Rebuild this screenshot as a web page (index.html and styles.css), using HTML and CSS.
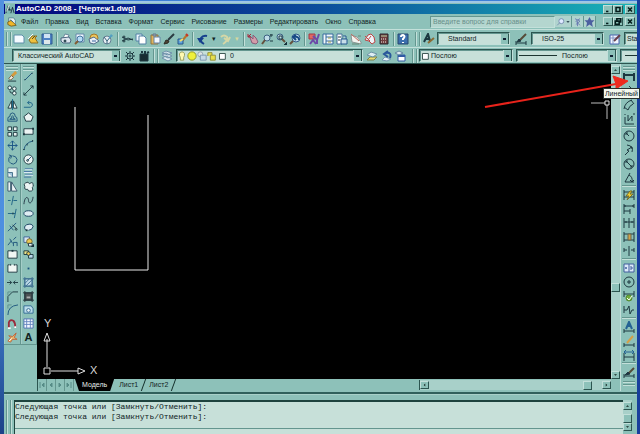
FILE: index.html
```html
<!DOCTYPE html>
<html lang="ru">
<head>
<meta charset="utf-8">
<title>AutoCAD 2008 - [Чертеж1.dwg]</title>
<link rel="stylesheet" href="styles.css">
</head>
<body>
<div class="app">
  <header class="titlebar">
    <svg class="logo" viewBox="0 0 12 12"><rect width="12" height="12" fill="#7fb9b4" stroke="none"/><path d="M1 11L4 2L6 8M3 7H7M7 11L9 4L11 11" stroke="#123"/><path d="M2 9L5 1" stroke="#fff"/></svg>
    <h1>AutoCAD 2008 - [Чертеж1.dwg]</h1>
    <div class="winbtns">
      <button aria-label="Свернуть"><svg viewBox="0 0 9 9"><path d="M2 7H5" /></svg></button>
      <button aria-label="Развернуть"><svg viewBox="0 0 9 9"><path d="M2 2H7V7H2Z"/></svg></button>
      <button class="close" aria-label="Закрыть"><svg viewBox="0 0 9 9"><path d="M2 2L7 7M7 2L2 7"/></svg></button>
    </div>
  </header>

  <nav class="menubar">
    <svg class="logo" viewBox="0 0 12 12"><path d="M2 1H8L10 4V9H2Z" fill="#e8f0f0" stroke="#4a7a8a"/><path d="M1 6L5 4L11 10L5 11L1 9Z" fill="#f0b62a" stroke="#6f5a1a"/><path d="M4 3L7 6" stroke="#2a6ab0"/></svg>
    <a href="#">Файл</a><a href="#">Правка</a><a href="#">Вид</a><a href="#">Вставка</a><a href="#">Формат</a><a href="#">Сервис</a><a href="#">Рисование</a><a href="#">Размеры</a><a href="#">Редактировать</a><a href="#">Окно</a><a href="#">Справка</a>
    <div class="help">
      <input type="text" aria-label="Поиск в справке" placeholder="Введите вопрос для справки">
      <button class="wide" aria-label="Найти"><svg viewBox="0 0 16 12"><circle cx="6" cy="5" r="3" fill="#dfe9ff" stroke="#6f86a8"/><path d="M4 7L1 10" stroke="#6f86a8"/><path d="M12 5H16L14 7Z" fill="#123" stroke="none"/></svg></button>
      <button aria-label="Центр связи"><svg viewBox="0 0 12 12"><path d="M3 2L9 5L4 9M9 2L4 5L9 10M6 5V11" stroke="#6573b0"/></svg></button>
      <button aria-label="Избранное"><svg viewBox="0 0 12 12"><path d="M6 0L8 4H12L9 7L10 12L6 9L2 12L3 7L0 4H4Z" fill="#4c5fa0" stroke="none"/></svg></button>
    </div>
    <div class="winbtns">
      <button aria-label="Свернуть чертеж"><svg viewBox="0 0 9 9"><path d="M2 7H5"/></svg></button>
      <button aria-label="Восстановить чертеж"><svg viewBox="0 0 9 9"><path d="M3 3V1H8V5H6M1 4H6V8H1Z"/></svg></button>
      <button class="close" aria-label="Закрыть чертеж"><svg viewBox="0 0 9 9"><path d="M2 2L7 7M7 2L2 7"/></svg></button>
    </div>
  </nav>

  <div class="bar">
    <i class="grip first"></i>
    <button class="tool" aria-label="Создать"><svg viewBox="0 0 12 12"><path d="M1 2H9L11 4V10H1Z" fill="#f4faff" stroke="#5f8fa8"/></svg></button>
    <button class="tool" aria-label="Открыть"><svg viewBox="0 0 12 12"><path d="M2 7L5 3H10L8 5L11 10H4Z" fill="#eec03e" stroke="#8a7024"/><path d="M1 6L6 1" stroke="#f6fbff"/><path d="M5 6L8 3" stroke="#584d28"/></svg></button>
    <button class="tool" aria-label="Сохранить"><svg viewBox="0 0 12 12"><path d="M1 1H11V11H1Z" fill="#4d82c4" stroke="#315a91"/><path d="M3 1H9V5H3Z" fill="#cfe3f4" stroke="none"/><path d="M3 7H9V11H3Z" fill="#dfe8ea" stroke="none"/></svg></button>
    <i class="sep"></i>
    <button class="tool" aria-label="Печать"><svg viewBox="0 0 12 12"><path d="M3 5L5 1L9 2L8 5" fill="#fff" stroke="#68889a"/><path d="M1 5L9 4L11 7L10 10L3 10L1 8Z" fill="#dbe5ee" stroke="#4b6680"/><circle cx="5" cy="8" r="1" fill="#4b6680"/></svg></button>
    <button class="tool" aria-label="Предварительный просмотр"><svg viewBox="0 0 12 12"><path d="M2 1H10V9H2Z" fill="#f1f7ff" stroke="#6488a8"/><circle cx="6" cy="6" r="3" fill="#b5dcf5" stroke="#4474a0"/><path d="M4 8L1 11" stroke="#835d34" stroke-width="2"/></svg></button>
    <button class="tool" aria-label="Публикация"><svg viewBox="0 0 12 12"><circle cx="6" cy="5" r="4" fill="#ecc65b" stroke="#a67828"/><path d="M1 6L6 4L11 8L6 11L2 10Z" fill="#e7eef5" stroke="#526b8a"/><path d="M4 8H8" stroke="#3d66a0"/></svg></button>
    <button class="tool" aria-label="3D DWF"><svg viewBox="0 0 12 12"><circle cx="5" cy="7" r="4" fill="#e6edf2" stroke="#647f93"/><path d="M2 4L5 8L10 2M5 8V11" stroke="#36647a"/><path d="M6 6L9 1L11 3Z" fill="#52a0c3" stroke="none"/></svg></button>
    <i class="sep"></i>
    <button class="tool" aria-label="Вырезать"><svg viewBox="0 0 12 12"><path d="M1 4L7 7L12 6M1 8L7 5L12 7"/><circle cx="3" cy="4" r="1"/><circle cx="3" cy="8" r="1"/></svg></button>
    <button class="tool" aria-label="Копировать"><svg viewBox="0 0 12 12"><path d="M1 1H7V8H1Z" fill="#eaf4fc" stroke="#5381a5"/><path d="M4 3H9L11 5V11H4Z" fill="#fff" stroke="#5381a5"/></svg></button>
    <button class="tool" aria-label="Вставить"><svg viewBox="0 0 12 12"><path d="M2 2H9V11H2Z" fill="#dfb45c" stroke="#8b7342"/><path d="M4 1H7V3H4Z" fill="#9ab" stroke="#678"/><path d="M5 4H11V10H5Z" fill="#f3f8ff" stroke="#6583a5"/></svg></button>
    <button class="tool" aria-label="Копирование свойств"><svg viewBox="0 0 12 12"><path d="M5 7L11 1" stroke="#2b3b42" stroke-width="2"/><path d="M1 11L3 7L6 8L5 10Z" fill="#4d4434" stroke="#2d2c24"/></svg></button>
    <button class="tool" aria-label="Редактор блоков"><svg viewBox="0 0 12 12"><path d="M5 8L10 2" stroke="#b9742a" stroke-width="2"/><path d="M9 1L11 3" stroke="#c63526" stroke-width="2"/><path d="M1 6H6V11H1Z" fill="#61a5df" stroke="#275788"/><path d="M3 8L6 6" stroke="#f5dd67" stroke-width="2"/></svg></button>
    <i class="sep"></i>
    <button class="tool" aria-label="Отменить"><svg viewBox="0 0 12 12"><path d="M8 11Q3 8 5 5Q7 2 11 3" stroke="#163f8d" stroke-width="2"/><path d="M1 5H8L4 10Z" fill="#163f8d" stroke="none"/></svg></button>
    <button class="drop" aria-label="Список отмены">▾</button>
    <button class="tool" aria-label="Повторить"><svg viewBox="0 0 12 12"><path d="M4 11Q9 8 8 4Q5 1 2 4M5 5L9 8L11 4" stroke="#d5d7a6" stroke-width="2"/></svg></button>
    <button class="drop faint" aria-label="Список повтора">▾</button>
    <i class="sep"></i>
    <button class="tool" aria-label="Панорамирование"><svg viewBox="0 0 12 12"><path d="M2 2L6 6V2L9 5L11 9L9 11L5 10Z" fill="#d39caa" stroke="#875e79"/><path d="M1 4L4 1M1 1V4H4" stroke="#a92739"/></svg></button>
    <button class="tool" aria-label="Зумирование"><svg viewBox="0 0 12 12"><circle cx="6" cy="5" r="3" fill="#bfdde8" stroke="#3b6080"/><path d="M4 7L1 11" stroke="#65513e" stroke-width="2"/><path d="M9 2H12M10 1V4M9 8H12"/></svg></button>
    <button class="tool" aria-label="Зумирование рамкой"><svg viewBox="0 0 12 12"><circle cx="5" cy="4" r="3" fill="#bfdde8" stroke="#3b6080"/><path d="M7 6L10 9" stroke="#65513e" stroke-width="2"/><path d="M4 3H7V6H4Z"/><path d="M12 9V12H9Z" fill="#123"/></svg></button>
    <button class="tool" aria-label="Предыдущий вид"><svg viewBox="0 0 12 12"><circle cx="7" cy="5" r="4" fill="#bfdde8" stroke="#335b8c"/><path d="M4 8L1 11" stroke="#65513e" stroke-width="2"/><path d="M10 7Q10 3 5 4M7 2L4 4L7 7" stroke="#164884" stroke-width="2"/></svg></button>
    <i class="sep"></i>
    <button class="tool" aria-label="Свойства"><svg viewBox="0 0 12 12"><path d="M1 1H7V6H1Z" fill="#df6863" stroke="#a53946"/><path d="M5 3L9 7L11 1M2 11L5 7L8 11M9 6V11" stroke="#6c4aa8" stroke-width="2"/></svg></button>
    <button class="tool" aria-label="Центр управления"><svg viewBox="0 0 12 12"><path d="M1 1H11V11H1Z" fill="#f3f8fb" stroke="#366b9d"/><path d="M4 1V11M4 4H11M4 8H11" stroke="#366b9d"/><path d="M6 5H9M6 9H9" stroke="#9f9c49"/></svg></button>
    <button class="tool" aria-label="Инструментальные палитры"><svg viewBox="0 0 12 12"><path d="M1 1H6V11H1Z" fill="#fff" stroke="#456f99"/><path d="M7 3H10V6M5 6H11V11H5Z" fill="#c7dde9" stroke="#24588d"/><path d="M2 4H5M2 7H4"/></svg></button>
    <button class="tool" aria-label="Подшивки"><svg viewBox="0 0 12 12"><path d="M1 2L7 4L11 9V11L2 9Z" fill="#f1f3ef" stroke="#8b9795"/><path d="M1 1L9 8" stroke="#bf6c61"/><path d="M8 3H11M2 11H9" stroke="#687"/></svg></button>
    <button class="tool" aria-label="Пометки"><svg viewBox="0 0 12 12"><path d="M4 2L7 1L10 4L11 9L8 11L5 8L1 7Z" fill="#edf2f7" stroke="#bd4545"/><path d="M1 3L6 8M7 3L4 7" stroke="#c74545"/></svg></button>
    <button class="tool" aria-label="Калькулятор"><svg viewBox="0 0 12 12"><path d="M2 1H10V11H2Z" fill="#713e3e" stroke="#26272d"/><path d="M3 3H9" stroke="#b7d3a8"/><path d="M3 6H9M3 9H9" stroke="#edf1ed" stroke-dasharray="1 1"/></svg></button>
    <i class="sep"></i>
    <button class="tool" aria-label="Справка"><svg viewBox="0 0 12 12"><path d="M1 1H11V11H1Z" fill="#3c6fae" stroke="#27466e"/><path d="M4 4Q4 2 6 2Q9 3 6 6V7M6 9V10" stroke="#fff" stroke-width="2"/></svg></button>
    <i class="grip second"></i>
    <button class="tool" aria-label="Текстовые стили"><svg viewBox="0 0 12 12"><path d="M1 9L5 1L7 8M3 6H6" stroke-width="2"/><path d="M5 10L11 5" stroke="#8b6b34" stroke-width="2"/></svg></button>
    <select class="field style" aria-label="Текстовый стиль"><option>Standard</option></select>
    <button class="tool gap" aria-label="Размерные стили"><svg viewBox="0 0 12 12"><path d="M1 8V12M11 8V12M1 10H11"/><path d="M4 8L11 1" stroke="#554b38" stroke-width="2"/><path d="M2 9L4 6L6 8Z" fill="#234"/></svg></button>
    <select class="field style" aria-label="Размерный стиль"><option>ISO-25</option></select>
    <button class="tool gap" aria-label="Стили таблиц"><svg viewBox="0 0 12 12"><path d="M1 2H10V11H1Z" fill="#f1f6ff" stroke="#4965b0"/><path d="M1 5H10M4 2V11" stroke="#8095c5"/><path d="M5 8L11 2" stroke="#673f4c" stroke-width="2"/></svg></button>
    <select class="field cut" aria-label="Стиль таблиц"><option>Standard</option></select>
  </div>

  <div class="bar low">
    <select class="field space" aria-label="Рабочее пространство"><option>Классический AutoCAD</option></select>
    <button class="tool" aria-label="Параметры рабочего пространства"><svg viewBox="0 0 12 12"><circle cx="6" cy="6" r="3"/><circle cx="6" cy="6" r="1"/><path d="M6 1V3M6 9V11M1 6H3M9 6H11M2 2L4 4M8 8L10 10M10 2L8 4M4 8L2 10"/></svg></button>
    <button class="tool" aria-label="Мое рабочее пространство"><svg viewBox="0 0 12 12"><path d="M2 4H10V11H2Z" fill="#182c31"/><path d="M3 2H5M7 1V4M9 3L11 2" stroke-width="2"/></svg></button>
    <i class="grip"></i>
    <button class="tool" aria-label="Слои"><svg viewBox="0 0 12 12"><path d="M1 8L5 6L11 9L7 11Z M1 5L5 3L11 6L7 8Z M1 3L5 1L11 3L7 5Z" fill="#dceaf0" stroke="#6e91aa"/></svg></button>
    <div class="field layer">
      <svg viewBox="0 0 12 12"><path d="M4 8Q1 2 6 1Q11 2 8 8V11H4Z" fill="#fff9b1" stroke="#8b9451"/></svg>
      <svg viewBox="0 0 12 12"><circle cx="6" cy="6" r="5" fill="#eff03b" stroke="#858b27"/></svg>
      <svg viewBox="0 0 12 12"><circle cx="4" cy="4" r="3" fill="#e2e6e5" stroke="#8b9eac"/><path d="M4 5H11V11H4Z" fill="#c6d9e7" stroke="#7491a9"/></svg>
      <svg viewBox="0 0 12 12"><path d="M1 6V2H6V5M4 5H10V11H4Z" fill="#e7df49" stroke="#89852f"/></svg>
      <svg class="swatch" viewBox="0 0 12 12"><path d="M3 3H10V10H3Z" fill="#fff" stroke="#203d3a"/></svg>
      <select aria-label="Слой"><option>0</option></select>
    </div>
    <button class="tool" aria-label="Сделать слой текущим"><svg viewBox="0 0 12 12"><path d="M1 10L4 7H11L8 10Z" fill="#eadc71" stroke="#7e8551"/><path d="M1 5L5 2L11 4L7 7Z" fill="#dfeef2" stroke="#6d93a5"/></svg></button>
    <button class="tool" aria-label="Предыдущий слой"><svg viewBox="0 0 12 12"><path d="M2 10L5 7L11 9L7 11Z" fill="#e7f2f7" stroke="#7298b1"/><path d="M10 8Q12 2 6 3M8 1L4 4L8 7" stroke="#29579b" stroke-width="2"/></svg></button>
    <button class="tool" aria-label="Состояния слоев"><svg viewBox="0 0 12 12"><path d="M4 5H11V11H4Z" fill="#fff" stroke="#315ba5"/><path d="M4 6H11" stroke="#315ba5" stroke-width="2"/><path d="M1 3L5 1L9 3L5 5Z" fill="#d9e8ef" stroke="#6285a0"/></svg></button>
    <i class="grip second"></i>
    <div class="field color"><svg class="swatch" viewBox="0 0 12 12"><path d="M3 3H10V10H3Z" fill="#fff" stroke="#203d3a"/></svg><select aria-label="Цвет"><option>Послою</option></select></div>
    <div class="field linetype"><i class="line"></i><select aria-label="Тип линий"><option>Послою</option></select></div>
    <div class="field cut"><i class="line"></i><select aria-label="Вес линий"><option>Послою</option></select></div>
  </div>

  <main class="work">
    <aside class="tools" aria-label="Редактирование">
      <i class="hgrip"></i>
      <div class="stack">
        <button aria-label="Стереть"><svg viewBox="0 0 12 12"><path d="M5 6L10 1" stroke="#d59a3c" stroke-width="3"/><path d="M2 8L5 5L7 7L4 10Z" fill="#f4eee3" stroke="#725536"/><path d="M1 11H10"/></svg></button>
        <button aria-label="Копировать объект"><svg viewBox="0 0 12 12"><circle cx="3" cy="3" r="2" fill="#edf7f5"/><circle cx="8" cy="4" r="2" fill="#edf7f5"/><circle cx="8" cy="9" r="2" fill="#edf7f5"/><path d="M3 6Q3 9 6 9"/></svg></button>
        <button aria-label="Зеркало"><svg viewBox="0 0 12 12"><path d="M5 2V10H1ZM7 2V10H11Z" fill="#edf7f5"/><path d="M6 0V12" stroke="#17658a"/></svg></button>
        <button aria-label="Подобие"><svg viewBox="0 0 12 12"><path d="M1 10V7Q1 5 3 5Q3 1 6 1Q9 1 9 5Q11 5 11 8V10Z" stroke="#1c527b"/><path d="M3 8Q3 7 5 7Q5 4 6 4Q7 4 7 7Q9 7 9 8Z" stroke="#1c527b"/></svg></button>
        <button aria-label="Массив"><svg viewBox="0 0 12 12"><path d="M1 1H5V5H1ZM7 1H11V5H7ZM1 7H5V11H1ZM7 7H11V11H7Z" fill="#e4efed"/></svg></button>
        <button aria-label="Перенести"><svg viewBox="0 0 12 12"><path d="M6 1V11M1 6H11M4 3L6 1L8 3M4 9L6 11L8 9M3 4L1 6L3 8M9 4L11 6L9 8" stroke="#185386"/></svg></button>
        <button aria-label="Повернуть"><svg viewBox="0 0 12 12"><path d="M4 2Q1 4 2 8Q4 11 7 11Q11 10 11 6Q10 2 6 2M2 1L5 2L4 5" stroke="#1c527b"/></svg></button>
        <button aria-label="Масштаб"><svg viewBox="0 0 12 12"><path d="M1 1H11V11H1Z" fill="#edf5f6" stroke="#4a7187"/><path d="M1 6H6V11" fill="#a1c5dc" stroke="#426d89"/></svg></button>
        <button aria-label="Растянуть"><svg viewBox="0 0 12 12"><path d="M1 1H4V11H1ZM5 1L11 11H5Z" fill="#edf5f6" stroke="#39576b"/></svg></button>
        <button aria-label="Обрезать"><svg viewBox="0 0 12 12"><path d="M1 6H4M7 6H11M7 1L5 11" stroke="#1c6083"/></svg></button>
        <button aria-label="Удлинить"><svg viewBox="0 0 12 12"><path d="M1 6H9M10 1L8 11" stroke="#1c6083"/><path d="M6 6H7" stroke-width="2"/></svg></button>
        <button aria-label="Разорвать в точке"><svg viewBox="0 0 12 12"><path d="M1 10L10 1M3 4L7 9" stroke="#1c527b"/><path d="M6 3L10 7" stroke="#234"/><circle cx="10" cy="8" r="1"/></svg></button>
        <button aria-label="Разорвать"><svg viewBox="0 0 12 12"><path d="M1 10L5 5M7 4L10 1M3 3L6 8M7 11V7H11V11" stroke="#1c527b"/></svg></button>
        <button aria-label="Прямоугольник разрыва"><svg viewBox="0 0 12 12"><path d="M1 2H11V10H1Z" fill="#f1f7f4"/><path d="M5 2H7" stroke-width="2"/></svg></button>
        <button aria-label="Разрыв в контуре"><svg viewBox="0 0 12 12"><path d="M3 2H1V10H11V2H9" fill="#f1f7f4"/><path d="M4 1V3M8 1V3"/></svg></button>
        <button aria-label="Соединить"><svg viewBox="0 0 12 12"><path d="M0 6H5M7 6H12M3 4L5 6L3 8M9 4L7 6L9 8"/></svg></button>
        <button aria-label="Фаска"><svg viewBox="0 0 12 12"><path d="M1 12V6L6 1H12"/><path d="M1 5V1H5" stroke="#5e928f"/></svg></button>
        <button aria-label="Сопряжение"><svg viewBox="0 0 12 12"><path d="M1 12Q1 2 12 1" stroke="#1b547d"/><path d="M1 5V1H5" stroke="#5e928f"/></svg></button>
        <button aria-label="Магнит"><svg viewBox="0 0 12 12"><path d="M2 11L2 5Q3 1 7 3Q9 5 9 10" stroke="#9b2b3c" stroke-width="2"/><path d="M1 11H4M8 10H10" stroke="#fff" stroke-width="2"/></svg></button>
        <button aria-label="Расчленить"><svg viewBox="0 0 12 12"><path d="M1 10L4 6L2 4L6 5L10 1L8 6L11 8L6 8L4 11Z" fill="#edbb70" stroke="#bb623a"/><path d="M2 10L5 7" stroke="#fff"/></svg></button>
      </div>
    </aside>
    <aside class="tools" aria-label="Рисование">
      <i class="hgrip"></i>
      <div class="stack">
        <button aria-label="Отрезок"><svg viewBox="0 0 12 12"><path d="M2 10L10 2" stroke="#1b547d"/><path d="M2 9V10M10 2V3" stroke="#123"/></svg></button>
        <button aria-label="Прямая"><svg viewBox="0 0 12 12"><path d="M1 11L11 1M1 8V11H4M8 1H11V4"/></svg></button>
        <button aria-label="Полилиния"><svg viewBox="0 0 12 12"><path d="M1 9H8Q12 7 9 4H5M7 2L5 4L7 6" stroke="#1b6288"/></svg></button>
        <button aria-label="Многоугольник"><svg viewBox="0 0 12 12"><path d="M6 1L11 5L9 10H3L1 5Z" fill="#ecf4f3"/></svg></button>
        <button aria-label="Прямоугольник"><svg viewBox="0 0 12 12"><path d="M1 3H11V9H1Z" fill="#ecf4f3"/><path d="M0 9H2M10 3H12" stroke-width="2"/></svg></button>
        <button aria-label="Дуга"><svg viewBox="0 0 12 12"><path d="M1 11Q2 3 11 1" stroke="#1b547d"/><path d="M1 10V11M4 5H5M10 1H11" stroke-width="2"/></svg></button>
        <button aria-label="Круг"><svg viewBox="0 0 12 12"><circle cx="6" cy="6" r="5" fill="#ecf4f3"/><path d="M5 7L9 3" stroke="#1b547d"/><circle cx="5" cy="7" r="1"/></svg></button>
        <button aria-label="Полосы"><svg viewBox="0 0 12 12"><path d="M2 2H11M1 5H10M2 8H11M1 11H9" stroke="#3f6fa2"/><path d="M2 3H10M1 6H10M2 9H11" stroke="#e2eff8"/></svg></button>
        <button aria-label="Облако"><svg viewBox="0 0 12 12"><path d="M3 2Q6 0 7 3Q11 0 11 4Q12 6 10 7Q12 11 8 11Q6 12 5 9Q1 10 2 6Q0 3 3 2Z" fill="#ecf4f3"/></svg></button>
        <button aria-label="Сплайн"><svg viewBox="0 0 12 12"><path d="M1 10C2 0 6 2 6 6S10 10 11 2" stroke="#234"/></svg></button>
        <button aria-label="Эллипс"><svg viewBox="0 0 12 12"><ellipse cx="6" cy="6" rx="5" ry="3" fill="#dfedf3" stroke="#173e5e"/></svg></button>
        <button aria-label="Эллиптическая дуга"><svg viewBox="0 0 12 12"><path d="M3 9Q0 5 4 3Q10 1 11 5Q10 9 6 9" fill="#dfedf3" stroke="#173e5e"/><path d="M3 9H5" stroke-width="2"/></svg></button>
        <button aria-label="Вставить блок"><svg viewBox="0 0 12 12"><path d="M1 1H7V7H1Z" fill="#d6e5f2" stroke="#3e6394"/><circle cx="7" cy="6" r="3" fill="#eac854" stroke="#71652d"/><path d="M6 8H10V11H6Z" fill="#edf4f8"/><path d="M12 9V12H9Z" fill="#123"/></svg></button>
        <button aria-label="Создать блок"><svg viewBox="0 0 12 12"><path d="M1 2H6V6H1Z" fill="#e8e28a"/><path d="M6 6H11V10H6Z" fill="#b9d8ea"/><circle cx="6" cy="5" r="2" fill="#ecc956"/></svg></button>
        <button aria-label="Точка"><svg viewBox="0 0 12 12"><path d="M6 5V7" stroke="#1b547d" stroke-width="2"/></svg></button>
        <button aria-label="Штриховка"><svg viewBox="0 0 12 12"><path d="M2 2H10V10H2Z" fill="#bcd9e7" stroke="#2c5d83"/><path d="M2 7L7 2M3 10L10 3M7 10L10 7M0 2H12M0 10H12M2 0V12M10 0V12" stroke="#3f7292"/></svg></button>
        <button aria-label="Градиент"><svg viewBox="0 0 12 12"><path d="M2 2H10V10H2Z" fill="#4d5254"/><path d="M0 2H12M0 10H12M2 0V12M10 0V12" stroke="#26343b"/><path d="M4 7H8" stroke="#a9aeae" stroke-width="2"/></svg></button>
        <button aria-label="Область"><svg viewBox="0 0 12 12"><path d="M1 2H9L11 5V10H1Z" fill="#bbddeb" stroke="#2e6790"/><circle cx="6" cy="7" r="2" fill="#e9f2f5" stroke="#2e6790"/></svg></button>
        <button aria-label="Таблица"><svg viewBox="0 0 12 12"><path d="M1 1H11V11H1Z" fill="#f4f8ff" stroke="#4c6eb0"/><path d="M1 4H11M1 7H11M4 1V11M8 1V11" stroke="#6685c0"/></svg></button>
        <button class="letter" aria-label="Многострочный текст">A</button>
      </div>
    </aside>

    <section class="drawing">
      <div class="canvas">
        <svg class="sketch" width="574" height="317" viewBox="0 0 574 317">
          <path d="M38 43V206H111V51" stroke="#e8e8e8"/>
          <path d="M10 303V275M14 307H41M7 304H13V310H7ZM7 277L10 269L13 277ZM41 304L48 307L41 310Z" stroke="#e0e0e0"/>
          <path d="M554 39H568M570 41V55" stroke="#bcbcbc"/><path d="M568 37H572V41H568Z" stroke="#e0e0e0"/>
        </svg>
        <span class="axis y">Y</span><span class="axis x">X</span>
      </div>
      <div class="vscroll"><button aria-label="Вверх"><svg viewBox="0 0 8 8"><path d="M2 5H6L4 3Z"/></svg></button><i></i><button aria-label="Вниз"><svg viewBox="0 0 8 8"><path d="M2 3H6L4 5Z"/></svg></button></div>
      <footer class="tabs">
        <div class="tabnav">
          <button aria-label="Первый лист"><svg viewBox="0 0 8 8"><path d="M2 1V7M6 2L4 4L6 6Z"/></svg></button><button aria-label="Предыдущий лист"><svg viewBox="0 0 8 8"><path d="M5 2L3 4L5 6Z"/></svg></button><button aria-label="Следующий лист"><svg viewBox="0 0 8 8"><path d="M3 2L5 4L3 6Z"/></svg></button><button aria-label="Последний лист"><svg viewBox="0 0 8 8"><path d="M6 1V7M2 2L4 4L2 6Z"/></svg></button>
        </div>
        <a class="active" href="#">Модель</a><a href="#">Лист1</a><a href="#">Лист2</a>
        <div class="hscroll"><button aria-label="Влево"><svg viewBox="0 0 8 8"><path d="M5 2L3 4L5 6Z"/></svg></button><i></i><button aria-label="Вправо"><svg viewBox="0 0 8 8"><path d="M3 2L5 4L3 6Z"/></svg></button></div>
      </footer>
      <div class="corner"></div>
    </section>

    <aside class="dims" aria-label="Размеры">
      <i class="hgrip"></i>
      <button aria-label="Линейный"><svg viewBox="0 0 12 12"><path d="M1 2V10M11 2V10M1 4H11" stroke-width="2"/></svg></button>
      <button aria-label="Параллельный"><svg viewBox="0 0 12 12"><path d="M2 8L8 2M1 6L4 10M6 1L10 5"/></svg></button>
      <button aria-label="Длина дуги"><svg viewBox="0 0 12 12"><path d="M1 10Q2 3 9 1M5 11Q6 7 10 5M1 8L5 11M8 1L11 5"/></svg></button>
      <button aria-label="Ординатный"><svg viewBox="0 0 12 12"><path d="M2 4V11H11M5 2V8L9 3V8M2 1V2M10 1H12"/></svg></button>
      <hr>
      <button aria-label="Радиус"><svg viewBox="0 0 12 12"><circle cx="6" cy="6" r="5"/><path d="M6 6L3 3M3 5V3H5"/></svg></button>
      <button aria-label="Излом"><svg viewBox="0 0 12 12"><path d="M4 1Q11 2 9 8M2 11L6 7L4 6L9 3M7 3H9V5"/></svg></button>
      <button aria-label="Диаметр"><svg viewBox="0 0 12 12"><circle cx="6" cy="6" r="5"/><path d="M3 3L9 9M3 5V3H5M7 9H9V7"/></svg></button>
      <button aria-label="Угловой"><svg viewBox="0 0 12 12"><path d="M7 1L2 10H11M6 3Q10 5 9 10M7 8L9 10L11 8"/></svg></button>
      <hr>
      <button aria-label="Быстрый размер"><svg viewBox="0 0 12 12"><path d="M1 1V11M11 1V11M1 3H11M1 8H11"/><path d="M7 2L3 7H6L4 11L10 5H7L9 2Z" fill="#f2cf32" stroke="#796c26"/></svg></button>
      <button aria-label="Базовый"><svg viewBox="0 0 12 12"><path d="M1 1V11M11 1V5M7 6V11M1 3H11M1 8H7M2 2V4M10 2V4"/></svg></button>
      <button aria-label="Цепь"><svg viewBox="0 0 12 12"><path d="M1 1V11M6 1V11M11 1V11M1 5H11M3 4V6M9 4V6"/></svg></button>
      <button aria-label="Расстояние"><svg viewBox="0 0 12 12"><path d="M1 1V11M11 1V11M1 3H11M1 9H11"/><path d="M5 3H8V9H5Z" fill="#d4a348" stroke="#6b674b"/></svg></button>
      <button aria-label="Разрыв размера"><svg viewBox="0 0 12 12"><path d="M1 5H4M8 5H11M1 3V7M11 3V7M6 1V11"/></svg></button>
      <hr>
      <button aria-label="Допуск"><svg viewBox="0 0 12 12"><path d="M1 2H11V10H1ZM6 2V10" fill="#dce9f9" stroke="#405f9c"/><path d="M2 6H4M3 5V7M8 4V8M8 6H10" stroke="#405f9c"/></svg></button>
      <button aria-label="Маркер центра"><svg viewBox="0 0 12 12"><circle cx="6" cy="6" r="5"/><path d="M6 4V8M4 6H8"/></svg></button>
      <button aria-label="Контроль"><svg viewBox="0 0 12 12"><path d="M1 1V7M11 1V7M1 4H11"/><circle cx="6" cy="8" r="3" fill="#72ad3b" stroke="#538832"/><path d="M4 8L6 10L9 6" stroke="#fff"/></svg></button>
      <button aria-label="Линейный излом"><svg viewBox="0 0 12 12"><path d="M1 2V9M1 6H4L6 2L7 10L9 6H11"/></svg></button>
      <hr>
      <button aria-label="Редактировать размер"><svg viewBox="0 0 12 12"><path d="M1 8V12M11 8V12M1 10H11"/><path d="M3 8L6 1L9 8M4 5H8" stroke="#246293" stroke-width="2"/></svg></button>
      <button aria-label="Редактировать текст"><svg viewBox="0 0 12 12"><path d="M1 8V12M11 8V12M1 10H11"/><path d="M4 8L10 1" stroke="#d5a046" stroke-width="2"/></svg></button>
      <button aria-label="Обновить размер"><svg viewBox="0 0 12 12"><path d="M1 4V12M11 4V12M1 8H11"/><path d="M2 3H10M3 1L1 3L3 5M9 1L11 3L9 5" stroke="#246293"/></svg></button>
      <hr>
      <button aria-label="Размерный стиль"><svg viewBox="0 0 12 12"><path d="M1 8V12M11 8V12M1 10H11"/><path d="M5 8L11 2" stroke="#554b38" stroke-width="2"/><path d="M2 9L5 6L7 8Z" fill="#234"/></svg></button>
      <i class="hgrip last"></i>
    </aside>
  </main>

  <section class="command">
    <i class="grip"></i>
    <div class="console">
      <pre>Следующая точка или [Замкнуть/Отменить]:
Следующая точка или [Замкнуть/Отменить]:</pre>
      <input type="text" aria-label="Команда">
    </div>
    <div class="vscroll"><button aria-label="Вверх по журналу"><svg viewBox="0 0 8 8"><path d="M2 5H6L4 3Z"/></svg></button><i></i><button aria-label="Вниз по журналу"><svg viewBox="0 0 8 8"><path d="M2 3H6L4 5Z"/></svg></button></div>
  </section>
</div>

<svg class="pointer" width="146" height="38" viewBox="0 0 146 38"><path d="M1 32L132 9" stroke="#e8231b" stroke-width="2"/><path d="M144 6L129 1L132 9L132 14Z" fill="#ee2a1e" stroke="#ee2a1e"/></svg>
<div class="tip" role="tooltip">Линейный</div>
</body>
</html>
```
FILE: styles.css
```css
:root {
  --face: #8dc1b9;
  --light: #c3e0da;
  --track: #a8d0c9;
  --field: #c7e0d9;
  --dark: #2c5550;
  --mid: #64968f;
}

* { box-sizing: border-box; }

body {
  margin: 0;
  height: 100vh;
  overflow: hidden;
  position: relative;
  background: linear-gradient(#5290df, #4c8fe0 60%, #1c4288);
  color: #10231f;
  font: 7px/10px "Liberation Sans", sans-serif;
}

svg { display: block; fill: none; stroke: #1d3840; }

button, select, input {
  margin: 0;
  padding: 0;
  border: 0;
  border-radius: 0;
  background: none;
  color: inherit;
  font: inherit;
}

a { color: inherit; text-decoration: none; }

.app {
  height: 100%;
  margin: 0 3px 0 4px;
  padding-top: 4px;
  display: flex;
  flex-direction: column;
  background: linear-gradient(#3d7fd6 1px, #9fc6e4 1px, #9fc6e4 3px, var(--face) 3px);
  box-shadow: 3px 0 #183e9c;
}

.titlebar, .menubar, .bar {
  display: flex;
  align-items: center;
  flex: none;
  overflow: hidden;
}

.titlebar {
  height: 10px;
  padding-right: 2px;
  background: linear-gradient(90deg, #03047d, #0b4e9c 50%, #1ab4b7);
  color: #fff;
}

.titlebar h1 {
  flex: 1;
  margin: 0;
  font: bold 8px/10px "Liberation Sans", sans-serif;
}

.logo { width: 10px; height: 10px; margin: 0 1px; flex: none; }

.winbtns { display: flex; flex: none; }
.winbtns .close { margin-left: 2px; }

.winbtns button, .vscroll button, .hscroll button {
  width: 9px;
  height: 8px;
  flex: none;
  background: var(--face);
  border: 1px solid;
  border-color: var(--light) var(--dark) var(--dark) var(--light);
}

.winbtns button { width: 10px; height: 9px; }
.winbtns svg { width: 8px; height: 7px; stroke: #041a1a; stroke-width: 2; }

.menubar { height: 15px; padding-right: 2px; gap: 7px; }
.menubar .logo { margin: 0 -3px 0 3px; }

.help { display: flex; align-items: center; margin-left: auto; }

.help input {
  width: 125px;
  height: 12px;
  padding: 0 2px;
  background: #b4d6cf;
  border: 1px solid;
  border-color: var(--mid) var(--light) var(--light) var(--mid);
}

.help input::placeholder { color: #688f8a; opacity: 1; }
.help button { width: 12px; height: 11px; background: #b0d3ce; border-right: 1px solid var(--mid); }
.help .wide { width: 17px; }
.help svg { width: 100%; height: 10px; }

.bar { height: 18px; padding-left: 2px; border-top: 1px solid var(--light); }
.bar.low { height: 17px; padding-left: 8px; border-bottom: 1px solid var(--dark); }

.grip {
  width: 5px;
  height: 14px;
  flex: none;
  margin: 0 2px;
  border: solid;
  border-width: 0 1px;
  border-color: var(--mid);
  box-shadow: 1px 0 var(--light), inset 1px 0 var(--light);
}

.first { margin: 0 1px 0 0; }
.second { margin-left: 5px; }

.sep {
  width: 1px;
  height: 14px;
  flex: none;
  margin: 0 2px;
  background: var(--mid);
  box-shadow: 1px 0 var(--light);
}

.tool { width: 14px; flex: none; padding: 0 1px; }
.tool svg { width: 12px; height: 12px; }
.tool.gap { margin: 0 2px 0 4px; }
.drop { width: 9px; flex: none; }
.faint { color: #d6d79d; }

.field {
  height: 13px;
  flex: none;
  display: flex;
  align-items: center;
  background-color: var(--field);
  border: 1px solid;
  border-color: var(--dark) var(--light) var(--light) var(--dark);
  box-shadow: inset 1px 1px var(--mid);
}

select { appearance: none; flex: 1; min-width: 0; height: 11px; padding-left: 5px; outline: 0; }

select.field, .field select {
  background-repeat: no-repeat;
  background-position: right 3px center, right 0 center;
  background-size: 3px 2px, 9px 11px;
  background-image: linear-gradient(#123, #123), linear-gradient(90deg, var(--light) 1px, var(--face) 1px, var(--face) 8px, var(--dark) 8px);
}

select.field { height: 13px; flex: none; }
.style { width: 73px; margin-left: 1px; padding-left: 10px; }
.cut { width: 74px; padding-left: 2px; }
.space { width: 109px; margin-right: 2px; }
.layer { width: 187px; margin: 0 2px; }
.layer svg, .swatch { width: 10px; height: 10px; flex: none; }
.layer select { padding-left: 3px; }
.color { width: 94px; margin-right: 3px; }
.color select { padding-left: 1px; }
.linetype { width: 101px; margin-right: 3px; }
.line { width: 38px; height: 1px; margin-left: 2px; background: #1c3531; flex: none; }

.work {
  flex: 1;
  min-height: 0;
  display: grid;
  grid-template-columns: 17px 16px minmax(0, 1fr) 17px;
}

.tools {
  display: flex;
  flex-direction: column;
  margin-bottom: 46px;
  padding-top: 1px;
  border-right: 1px solid var(--mid);
  border-bottom: 1px solid var(--mid);
  box-shadow: inset 1px 0 #a5cec8;
}

.hgrip {
  height: 4px;
  flex: none;
  margin: 1px 2px 0;
  border: solid var(--mid);
  border-width: 1px 0;
  box-shadow: 0 1px var(--light), inset 0 1px var(--light);
}

.stack { flex: 1; display: grid; grid-template-rows: repeat(20, minmax(0, 1fr)); }

.stack button, .dims button { display: flex; align-items: center; justify-content: center; }
.stack svg { width: 11px; height: 11px; }
.dims svg { width: 12px; height: 12px; }
.stack .letter { font: bold 11px/12px "Liberation Sans", sans-serif; }

.drawing {
  display: grid;
  grid-template-columns: minmax(0, 1fr) 9px;
  grid-template-rows: minmax(0, 1fr) 12px;
}

.canvas { position: relative; overflow: hidden; background: #000; }
.sketch { position: absolute; top: 0; right: 0; }

.axis {
  position: absolute;
  color: #d8d8d8;
  font: 11px/12px "Liberation Sans", sans-serif;
}

.axis.y { left: 7px; top: 253px; }
.axis.x { left: 53px; top: 300px; }

.vscroll { display: flex; flex-direction: column; background: var(--track); padding-top: 2px; }
.vscroll svg, .hscroll svg { width: 7px; height: 6px; fill: #10231f; stroke: none; }

.vscroll i, .hscroll i {
  width: 9px;
  height: 9px;
  background: var(--face);
  border: 1px solid;
  border-color: var(--light) var(--dark) var(--dark) var(--light);
}

.vscroll i { margin: auto 0 79px; }

.tabs { display: flex; align-items: center; overflow: hidden; background: var(--face); }
.tabnav { display: flex; width: 38px; height: 12px; flex: none; border-left: 1px solid var(--dark); }
.tabnav button { width: 9px; border-right: 1px solid var(--mid); }
.tabnav svg { width: 8px; height: 8px; fill: #578c87; stroke: #578c87; }

.tabs a {
  flex: none;
  height: 12px;
  line-height: 12px;
  padding: 0 6px 0 5px;
  position: relative;
}

.tabs a::after {
  content: "";
  position: absolute;
  top: 0;
  right: 0;
  width: 1px;
  height: 12px;
  background: #15302c;
  transform: skewX(-20deg);
}

.tabs .active {
  padding: 0 7px;
  background: #000;
  color: #e6efed;
  clip-path: polygon(0 0, 100% 0, calc(100% - 4px) 100%, 4px 100%);
}

.hscroll {
  flex: 1;
  max-width: 192px;
  margin-left: auto;
  display: flex;
  align-items: center;
  height: 10px;
  background: var(--track);
  border-left: 1px solid var(--dark);
}

.hscroll i { margin: 0 10px 0 auto; }
.corner { background: var(--face); }

.dims {
  display: flex;
  flex-direction: column;
  overflow: hidden;
  padding-top: 1px;
  border-left: 1px solid var(--light);
}

.dims button { height: 14px; flex: none; }
.dims .last { margin-top: 2px; }

.dims hr {
  width: 14px;
  height: 2px;
  flex: none;
  margin: 0 auto 1px;
  border: solid;
  border-width: 1px 0;
  border-color: var(--mid) transparent var(--light);
}

.command {
  height: 42px;
  flex: none;
  display: flex;
  margin-top: 1px;
  padding-top: 6px;
  padding-right: 5px;
  border-top: 2px solid #30605b;
  box-shadow: inset 0 1px var(--track);
}

.command .grip { height: auto; margin: 0 3px 0 2px; }

.console {
  flex: 1;
  min-width: 0;
  background: var(--field);
  border: solid #1e433e;
  border-width: 2px 0 0 1px;
}

.console pre {
  height: 27px;
  margin: 0;
  border-bottom: 1px solid var(--mid);
  font: 8px/10px "Liberation Mono", monospace;
}

.console input { display: block; width: 100%; height: 10px; }
.command .vscroll { margin-bottom: 3px; }
.command .vscroll i { margin: auto 0 0; }

.pointer { position: absolute; top: 75px; right: 10px; }

.tip {
  position: absolute;
  top: 88px;
  right: 0;
  padding: 0 1px;
  background: #f4f7ee;
  border: 1px solid #26302e;
  line-height: 9px;
}
```
